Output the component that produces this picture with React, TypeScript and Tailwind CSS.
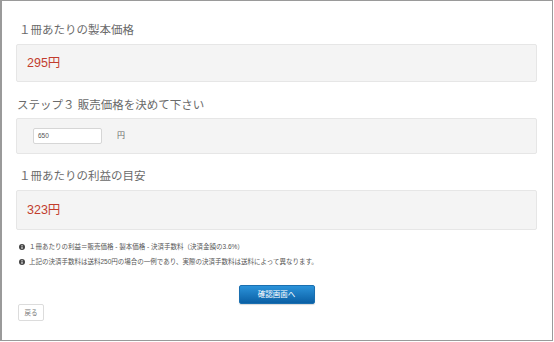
import React from "react";

const font = { fontFamily: '"Liberation Sans", "Noto Sans CJK JP", sans-serif' };

function Info() {
  return (
    <svg width="6" height="6" viewBox="0 0 12 12" className="shrink-0">
      <circle cx="6" cy="6" r="6" fill="#444" />
      <rect x="5" y="2.2" width="2" height="1.8" fill="#fff" />
      <rect x="5" y="5" width="2" height="4.8" fill="#fff" />
    </svg>
  );
}

export default function App() {
  return (
    <div style={font} className="w-[553px] h-[341px] bg-white border border-l-2 border-[#9a9a9a] pt-[21px] pl-[14px] pr-[15px] box-border">
      <div className="text-[11.5px] leading-[16px] text-[#6a6a6a] pl-[3px]">１冊あたりの製本価格</div>
      <div className="mt-[6px] h-[38px] flex items-center pl-[10px] bg-[#f4f4f4] border border-[#e6e6e6] rounded-[2px] text-[12.5px] text-[#c23d2e]">
        295円
      </div>
      <div className="mt-[15px] text-[11.5px] leading-[16px] text-[#6a6a6a] pl-[1px]">ステップ３&nbsp;販売価格を決めて下さい</div>
      <div className="mt-[5px] h-[36px] flex items-center pl-[16px] bg-[#f4f4f4] border border-[#e6e6e6] rounded-[2px]">
        <div className="w-[69px] h-[16px] bg-white border border-[#d6d6d6] rounded-[2px] flex items-center pl-[4px] text-[6.5px] text-[#555]">
          650
        </div>
        <span className="ml-[15px] text-[8px] text-[#666]">円</span>
      </div>
      <div className="mt-[14px] text-[11.5px] leading-[16px] text-[#6a6a6a] pl-[3px]">１冊あたりの利益の目安</div>
      <div className="mt-[6px] h-[40px] flex items-center pl-[10px] bg-[#f4f4f4] border border-[#e6e6e6] rounded-[2px] text-[12.5px] text-[#c23d2e]">
        323円
      </div>
      <div className="mt-[9px] pl-[3px] text-[6.5px] leading-[15px] text-[#555]">
        <div className="flex items-center gap-[4px]">
          <Info />
          <span>１冊あたりの利益＝販売価格 - 製本価格 - 決済手数料（決済金額の3.6%）</span>
        </div>
        <div className="flex items-center gap-[4px]">
          <Info />
          <span>上記の決済手数料は送料250円の場合の一例であり、実際の決済手数料は送料によって異なります。</span>
        </div>
      </div>
      <div className="mt-[16px] flex justify-center">
        <div className="w-[76px] h-[19px] rounded-[2px] bg-gradient-to-b from-[#2b93da] to-[#0a60a5] border border-[#1a6fb0] flex items-center justify-center text-white text-[7.5px] shadow-[0_1px_1px_rgba(0,0,0,0.15)]">
          確認画面へ
        </div>
      </div>
      <div className="ml-[2px] w-[26px] h-[17px] border border-[#dcdcdc] rounded-[2px] flex items-center justify-center text-[6.5px] text-[#777]">
        戻る
      </div>
    </div>
  );
}
